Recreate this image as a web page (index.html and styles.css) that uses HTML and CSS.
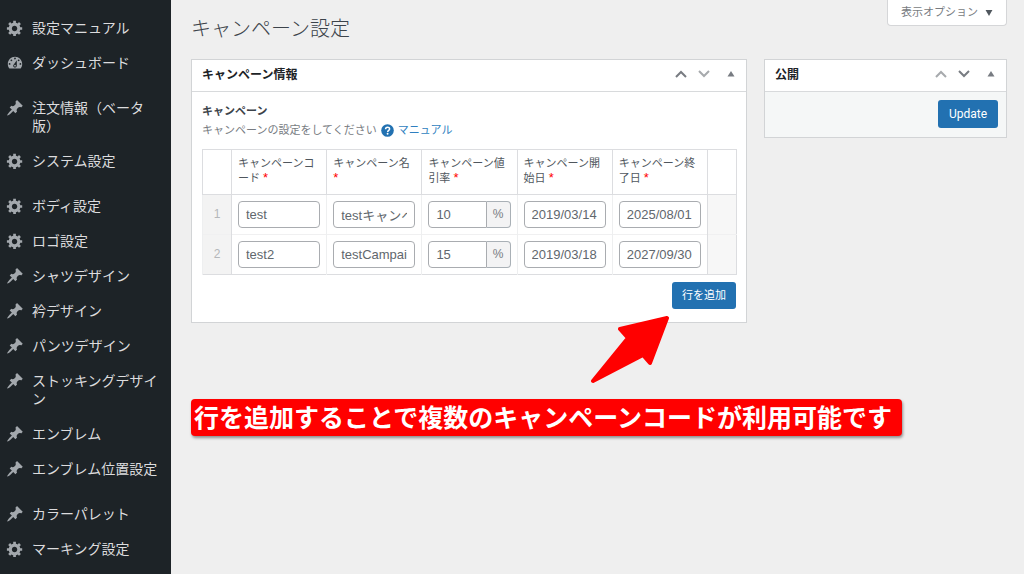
FILE: index.html
```html
<!DOCTYPE html>
<html lang="ja">
<head>
<meta charset="utf-8">
<meta name="viewport" content="width=device-width, initial-scale=1">
<title>キャンペーン設定</title>
<link rel="stylesheet" href="styles.css">
</head>
<body>
<svg class="sprite" aria-hidden="true">
  <symbol id="gear" viewBox="0 0 20 20"><path d="M18 12h-2.18c-.17.7-.44 1.35-.81 1.93l1.54 1.54-2.1 2.1-1.54-1.54c-.58.36-1.23.63-1.91.79V19H8v-2.18c-.68-.16-1.33-.43-1.91-.79l-1.54 1.54-2.12-2.12 1.54-1.54c-.36-.58-.63-1.23-.79-1.91H1V9.03h2.17c.16-.7.44-1.35.8-1.94L2.43 5.55l2.1-2.1 1.54 1.54c.58-.37 1.24-.64 1.93-.81V2h3v2.18c.68.16 1.33.43 1.91.79l1.54-1.54 2.12 2.12-1.54 1.54c.36.59.64 1.24.8 1.94H18V12zm-8.5 1.5c1.66 0 3-1.34 3-3s-1.34-3-3-3-3 1.34-3 3 1.34 3 3 3z"/></symbol>
  <symbol id="pin" viewBox="0 0 20 20"><path d="M10.44 3.02l1.82-1.82 6.36 6.35-1.83 1.82c-1.05-.68-2.48-.57-3.41.36l-.75.75c-.92.93-1.04 2.35-.35 3.41l-1.83 1.82-2.41-2.41-2.8 2.79c-.42.42-3.38 2.71-3.8 2.29s1.86-3.39 2.28-3.81l2.79-2.79L4.1 9.36l1.83-1.82c1.05.69 2.48.57 3.4-.36l.75-.75c.93-.92 1.05-2.35.36-3.41z"/></symbol>
  <symbol id="dash" viewBox="0 0 20 20"><path d="M3.76 16h12.48c1.1-1.37 1.76-3.11 1.76-5 0-4.42-3.58-8-8-8s-8 3.58-8 8c0 1.89.66 3.63 1.76 5zM10 4c.55 0 1 .45 1 1s-.45 1-1 1-1-.45-1-1 .45-1 1-1zM6 6c.55 0 1 .45 1 1s-.45 1-1 1-1-.45-1-1 .45-1 1-1zm8 0c.55 0 1 .45 1 1s-.45 1-1 1-1-.45-1-1 .45-1 1-1zm-5.37 5.55L12 7v6c0 1.1-.9 2-2 2s-2-.9-2-2c0-.57.24-1.08.63-1.45zM4 10c.55 0 1 .45 1 1s-.45 1-1 1-1-.45-1-1 .45-1 1-1zm12 0c.55 0 1 .45 1 1s-.45 1-1 1-1-.45-1-1 .45-1 1-1zm-5 3c0-.55-.45-1-1-1s-1 .45-1 1 .45 1 1 1 1-.45 1-1z"/></symbol>
  <symbol id="up" viewBox="0 0 12 8"><path d="M1 7 6 2l5 5" fill="none" stroke="currentColor" stroke-width="2"/></symbol>
  <symbol id="down" viewBox="0 0 12 8"><path d="M1 1 6 6l5-5" fill="none" stroke="currentColor" stroke-width="2"/></symbol>
  <symbol id="toggle" viewBox="0 0 8 6"><path d="M4 0 7.500 5.500h-7z"/></symbol>
</svg>
<div class="app">
  <nav class="sidebar" aria-label="管理メニュー">
    <ul class="menu">
      <li><a href="#"><svg class="icon"><use href="#gear"/></svg><span>設定マニュアル</span></a></li>
      <li><a href="#"><svg class="icon"><use href="#dash"/></svg><span>ダッシュボード</span></a></li>
      <li class="group"><a href="#"><svg class="icon"><use href="#pin"/></svg><span>注文情報（ベータ版）</span></a></li>
      <li><a href="#"><svg class="icon"><use href="#gear"/></svg><span>システム設定</span></a></li>
      <li class="group"><a href="#"><svg class="icon"><use href="#gear"/></svg><span>ボディ設定</span></a></li>
      <li><a href="#"><svg class="icon"><use href="#gear"/></svg><span>ロゴ設定</span></a></li>
      <li><a href="#"><svg class="icon"><use href="#pin"/></svg><span>シャツデザイン</span></a></li>
      <li><a href="#"><svg class="icon"><use href="#pin"/></svg><span>衿デザイン</span></a></li>
      <li><a href="#"><svg class="icon"><use href="#pin"/></svg><span>パンツデザイン</span></a></li>
      <li><a href="#"><svg class="icon"><use href="#pin"/></svg><span>ストッキングデザイン</span></a></li>
      <li><a href="#"><svg class="icon"><use href="#pin"/></svg><span>エンブレム</span></a></li>
      <li><a href="#"><svg class="icon"><use href="#pin"/></svg><span>エンブレム位置設定</span></a></li>
      <li class="group"><a href="#"><svg class="icon"><use href="#pin"/></svg><span>カラーパレット</span></a></li>
      <li><a href="#"><svg class="icon"><use href="#gear"/></svg><span>マーキング設定</span></a></li>
    </ul>
  </nav>
  <main class="content">
    <header class="topbar">
      <h1>キャンペーン設定</h1>
      <button class="screen-options" type="button">表示オプション<svg class="caret" viewBox="0 0 8 7" aria-hidden="true"><path d="M0 0h8L4 7z"/></svg></button>
    </header>
    <div class="columns">
      <section class="box">
        <header class="box-head">
          <h2>キャンペーン情報</h2>
          <div class="tools">
            <button type="button" aria-label="上へ移動"><svg class="chevron"><use href="#up"/></svg></button>
            <button type="button" aria-label="下へ移動" disabled><svg class="chevron"><use href="#down"/></svg></button>
            <button type="button" aria-label="パネルを切り替え"><svg class="toggle"><use href="#toggle"/></svg></button>
          </div>
        </header>
        <div class="box-body">
          <h3>キャンペーン</h3>
          <p class="hint">キャンペーンの設定をしてください<svg class="help" viewBox="0 0 13 13" aria-hidden="true"><circle cx="6.500" cy="6.500" r="6.300" fill="#2271b1"/><path d="M4.600 5.200c0-2.600 4-2.500 4-.2 0 1.400-1.900 1.300-1.900 2.900" fill="none" stroke="#fff" stroke-width="1.500"/><circle cx="6.600" cy="9.800" r=".95" fill="#fff"/></svg><a href="#">マニュアル</a></p>
          <table class="grid">
            <colgroup><col class="narrow"><col><col><col><col><col><col class="narrow"></colgroup>
            <thead>
              <tr>
                <th></th>
                <th scope="col">キャンペーンコード <span class="req">*</span></th>
                <th scope="col">キャンペーン名 <span class="req">*</span></th>
                <th scope="col">キャンペーン値引率 <span class="req">*</span></th>
                <th scope="col">キャンペーン開始日 <span class="req">*</span></th>
                <th scope="col">キャンペーン終了日 <span class="req">*</span></th>
                <th></th>
              </tr>
            </thead>
            <tbody>
              <tr>
                <td class="order">1</td>
                <td><input class="field" aria-label="キャンペーンコード" value="test"></td>
                <td><input class="field" aria-label="キャンペーン名" value="testキャンペーン"></td>
                <td><div class="rate"><input class="field" aria-label="キャンペーン値引率" value="10"><span class="unit">%</span></div></td>
                <td><input class="field" aria-label="キャンペーン開始日" value="2019/03/14"></td>
                <td><input class="field" aria-label="キャンペーン終了日" value="2025/08/01"></td>
                <td class="remove"></td>
              </tr>
              <tr>
                <td class="order">2</td>
                <td><input class="field" aria-label="キャンペーンコード" value="test2"></td>
                <td><input class="field" aria-label="キャンペーン名" value="testCampaign"></td>
                <td><div class="rate"><input class="field" aria-label="キャンペーン値引率" value="15"><span class="unit">%</span></div></td>
                <td><input class="field" aria-label="キャンペーン開始日" value="2019/03/18"></td>
                <td><input class="field" aria-label="キャンペーン終了日" value="2027/09/30"></td>
                <td class="remove"></td>
              </tr>
            </tbody>
          </table>
          <div class="actions"><button class="primary" type="button">行を追加</button></div>
        </div>
      </section>
      <section class="box">
        <header class="box-head">
          <h2>公開</h2>
          <div class="tools">
            <button type="button" aria-label="上へ移動" disabled><svg class="chevron"><use href="#up"/></svg></button>
            <button type="button" aria-label="下へ移動"><svg class="chevron"><use href="#down"/></svg></button>
            <button type="button" aria-label="パネルを切り替え"><svg class="toggle"><use href="#toggle"/></svg></button>
          </div>
        </header>
        <div class="publish"><button class="primary update" type="button">Update</button></div>
      </section>
    </div>
    <div class="callout">
      <svg class="arrow" viewBox="0 0 80 69" aria-hidden="true"><path d="M77 2 30 13 38 22 3 65 53 39 60 47z" fill="#f00" stroke="#f00" stroke-width="4" stroke-linejoin="round"/></svg>
      行を追加することで複数のキャンペーンコードが利用可能です
    </div>
  </main>
</div>
</body>
</html>
```
FILE: styles.css
```css
* {
  box-sizing: border-box;
}

body {
  margin: 0;
  background: #efefef;
  color: #50575e;
  font-family: "Liberation Sans", "Noto Sans CJK JP", sans-serif;
  font-size: 11px;
  line-height: 15px;
}

h1, h2, h3, p {
  margin: 0;
}

button, input {
  font: inherit;
}

.sprite {
  display: none;
}

.app {
  display: flex;
  min-height: 100vh;
}

.sidebar {
  flex: none;
  width: 171px;
  padding-top: 11px;
  background: #1d2327;
}

.menu {
  margin: 0;
  padding: 0;
  list-style: none;
}

.menu a {
  display: flex;
  gap: 8px;
  padding: 8px 12px 9px 6px;
  color: #dcdcde;
  font-size: 14px;
  line-height: 18px;
  text-decoration: none;
}

.menu span {
  flex: 1;
}

.menu .group {
  margin-top: 10px;
}

.icon {
  flex: none;
  width: 18px;
  height: 18px;
  fill: #a3a8ad;
}

.content {
  flex: 1;
  min-width: 0;
  padding: 0 17px 0 20px;
}

.topbar {
  display: flex;
  justify-content: space-between;
  align-items: flex-start;
  margin-bottom: 12px;
}

h1 {
  padding: 17px 0 6px;
  color: #3c434a;
  font-size: 20px;
  font-weight: 300;
  line-height: 24px;
}

.screen-options {
  display: flex;
  align-items: center;
  gap: 7px;
  height: 26px;
  padding: 0 13px;
  border: 1px solid #d5d6d8;
  border-top: 0;
  border-radius: 0 0 4px 4px;
  background: #fff;
  color: #787c82;
}

.caret {
  width: 8px;
  height: 6px;
  fill: #50575e;
}

.columns {
  display: grid;
  grid-template-columns: minmax(0, 1fr) 243px;
  align-items: start;
  gap: 17px;
}

.box {
  border: 1px solid #d2d4d6;
  background: #fff;
}

.box-head {
  display: flex;
  justify-content: space-between;
  align-items: center;
  height: 32px;
  padding: 0 10px;
  border-bottom: 1px solid #d8dadc;
}

h2 {
  color: #1d2327;
  font-size: 12px;
  font-weight: 700;
}

.tools {
  display: flex;
  align-items: center;
  padding-bottom: 3px;
}

.tools button {
  display: flex;
  justify-content: center;
  width: 23px;
  padding: 0;
  border: 0;
  background: none;
  color: #787c82;
}

.tools button:last-child {
  width: 10px;
  margin-left: 11px;
}

.tools button:disabled {
  color: #a7aaad;
}

.chevron {
  width: 12px;
  height: 8px;
}

.toggle {
  width: 8px;
  height: 6px;
  fill: currentColor;
}

.box-body {
  padding: 11px 9px 13px 10px;
}

h3 {
  color: #3c434a;
  font-size: 11px;
  font-weight: 700;
  line-height: 16px;
}

.hint {
  display: flex;
  align-items: center;
  gap: 4px;
  margin: 3px 0 11px;
  color: #787c82;
  line-height: 16px;
}

.hint a {
  color: #2f7fc0;
  text-decoration: none;
}

.help {
  width: 13px;
  height: 13px;
}

.grid {
  width: 100%;
  table-layout: fixed;
  border: 1px solid #dcdde0;
  border-collapse: collapse;
}

.narrow {
  width: 29px;
}

.grid th {
  height: 45px;
  padding: 6px 6px 8px;
  border: 1px solid #dcdde0;
  font-weight: 400;
  text-align: left;
  vertical-align: top;
}

.grid td {
  height: 40px;
  padding: 6px;
  border-top: 1px solid #f0f0f1;
  border-left: 1px solid #eeeff0;
}

.grid tbody tr:first-child td {
  border-top-color: #dcdde0;
}

.grid .order {
  padding: 0;
  border-right: 1px solid #dcdde0;
  background: #f3f3f3;
  color: #b4b7ba;
  font-size: 12px;
  text-align: center;
}

.grid .remove {
  border-left-color: #dcdde0;
  background: #f7f7f7;
}

.req {
  color: #f00;
  font-size: 13px;
  line-height: 12px;
}

.field {
  display: block;
  width: 100%;
  height: 27px;
  padding: 0 7px;
  border: 1px solid #a9acb0;
  border-radius: 4px;
  background: #fff;
  color: #61676d;
  font-size: 13px;
}

.rate {
  display: flex;
}

.rate .field {
  flex: 1;
  min-width: 0;
  border-radius: 4px 0 0 4px;
}

.unit {
  display: flex;
  justify-content: center;
  align-items: center;
  width: 24px;
  border: 1px solid #a9b0b6;
  border-left: 0;
  border-radius: 0 4px 4px 0;
  background: #f3f3f4;
  color: #787c82;
  font-size: 12px;
}

.actions {
  display: flex;
  justify-content: flex-end;
  padding: 7px 1px 0 0;
}

.primary {
  height: 27px;
  padding: 0 10px;
  border: 0;
  border-radius: 3px;
  background: #2271b1;
  color: #fff;
}

.update {
  height: 28px;
  padding: 0 11px;
  font-family: Roboto, sans-serif;
  font-size: 12px;
}

.publish {
  display: flex;
  justify-content: flex-end;
  padding: 8px 8px 9px;
  background: #f5f7f7;
}

.callout {
  position: relative;
  width: fit-content;
  margin-top: 76px;
  padding: 0 10px 2px 3px;
  border-radius: 4px;
  background: #f00;
  box-shadow: 1px 2px 3px rgba(0, 0, 0, 0.4);
  color: #fff;
  font-family: "Noto Sans CJK JP", sans-serif;
  font-size: 25px;
  font-weight: 700;
  line-height: 35px;
}

.arrow {
  position: absolute;
  bottom: calc(100% + 14px);
  left: 399px;
  width: 80px;
  height: 69px;
}
```
